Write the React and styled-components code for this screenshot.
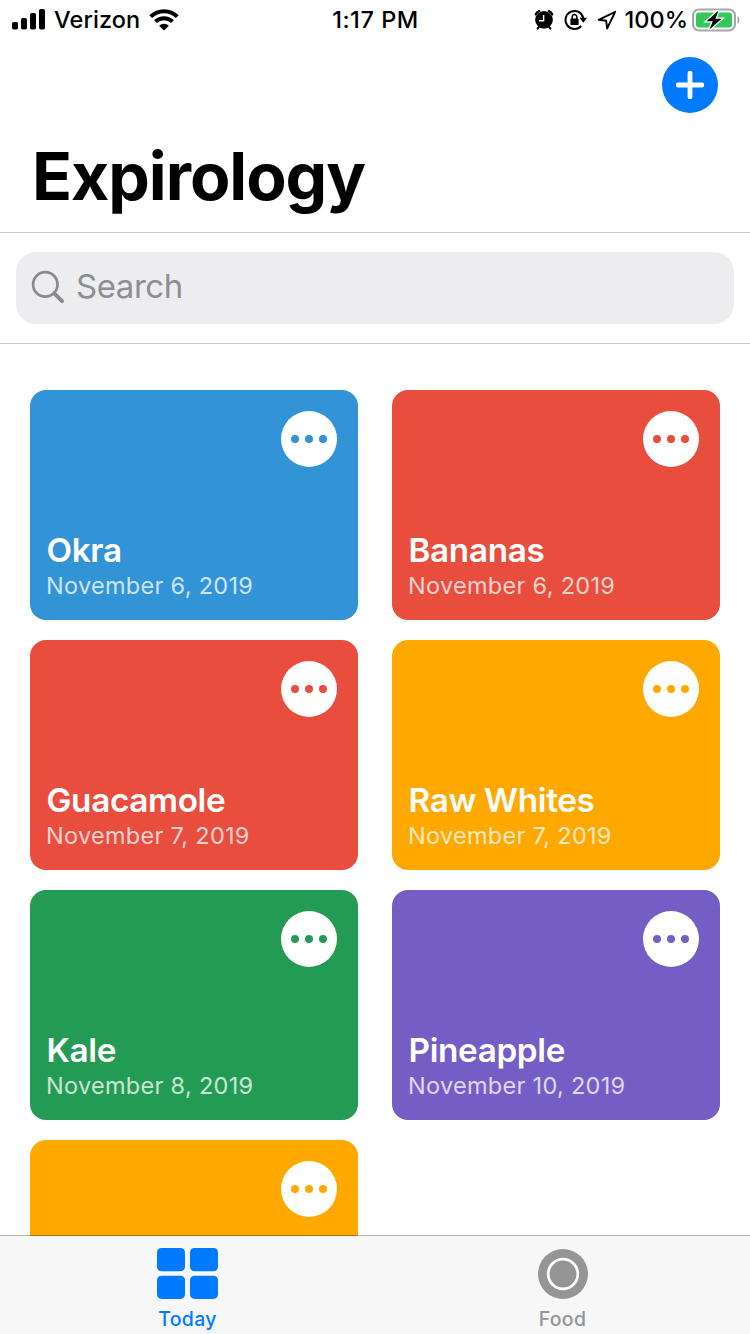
import React, { useState } from "react";
import styled, { createGlobalStyle, ThemeProvider } from "styled-components";

const theme = {
  primary: "#007aff",
  gray: "#8e8e93",
  inactive: "#959595",
  field: "#ededef",
  line: "#c8c8ca",
  bar: "#f7f7f7"
};

const GlobalStyle = createGlobalStyle`
  * {
    box-sizing: border-box;
  }
  body {
    margin: 0;
    background-color: #fff;
    font-family: Inter, "Liberation Sans", sans-serif;
    overflow: hidden;
  }
  button {
    border: none;
    padding: 0;
    font-family: inherit;
    background: none;
  }
`;

const Screen = styled.div`
  display: flex;
  flex-direction: column;
  width: 750px;
  height: 1334px;
  overflow: hidden;
`;

const StatusBar = styled.div`
  display: grid;
  grid-template-columns: 1fr auto 1fr;
  align-items: center;
  flex: none;
  height: 40px;
  padding: 0 9px 0 12px;
`;

const StatusGroup = styled.div`
  display: flex;
  align-items: center;
  justify-content: ${props => (props.$end ? "flex-end" : "flex-start")};
  svg {
    flex: none;
  }
`;

const StatusIcons = styled.div`
  display: flex;
  align-items: center;
  gap: 10px;
`;

const StatusText = styled.span`
  font-size: 23.5px;
  font-weight: 450;
  line-height: 40px;
  letter-spacing: ${props => props.$spacing || "0"};
  margin: ${props => props.$margin || "0"};
  white-space: nowrap;
`;

const Header = styled.header`
  flex: none;
  height: 193px;
  padding: 17px 32px 0 33px;
  border-bottom: 1px solid ${props => props.theme.line};
`;

const AddButton = styled.button`
  display: flex;
  align-items: center;
  justify-content: center;
  width: 56px;
  height: 56px;
  margin-left: auto;
  border-radius: 50%;
  background-color: ${props => props.theme.primary};
`;

const Title = styled.h1`
  margin: 23px 0 0 -1px;
  font-size: 66px;
  font-weight: 700;
  line-height: 80px;
  letter-spacing: -1.05px;
`;

const SearchWrapper = styled.div`
  flex: none;
  height: 111px;
  padding: 19px 16px;
  border-bottom: 1px solid ${props => props.theme.line};
`;

const SearchField = styled.label`
  display: flex;
  align-items: center;
  height: 72px;
  padding-left: 14px;
  border-radius: 20px;
  background-color: ${props => props.theme.field};
  svg {
    margin-bottom: 2px;
  }
`;

const SearchInput = styled.input`
  flex: auto;
  height: 72px;
  margin-left: 10px;
  padding: 0 0 5px;
  border: none;
  outline: none;
  background: none;
  font-family: inherit;
  font-size: 33px;
  letter-spacing: -0.45px;
  &::placeholder {
    color: ${props => props.theme.gray};
    opacity: 1;
  }
`;

const Cards = styled.main`
  display: grid;
  grid-template-columns: 328px 328px;
  grid-auto-rows: 230px;
  gap: 20px 34px;
  flex: 1 1 0;
  min-height: 0;
  padding: 46px 30px 0;
  overflow: hidden;
`;

const Card = styled.article`
  display: flex;
  flex-direction: column;
  justify-content: space-between;
  padding: 21px 21px 19px 16px;
  border-radius: 16px;
  background-color: ${props => props.$color};
  color: #fff;
`;

const MoreButton = styled.button`
  display: flex;
  align-items: center;
  justify-content: center;
  gap: 5.6px;
  width: 56px;
  height: 56px;
  margin-left: auto;
  border-radius: 50%;
  background-color: #fff;
`;

const Dot = styled.span`
  width: 8.2px;
  height: 8.2px;
  border-radius: 50%;
  background-color: ${props => props.$color};
`;

const FoodName = styled.h2`
  margin: 0 0 1px 0.5px;
  font-size: 33.3px;
  font-weight: 600;
  line-height: 40px;
  letter-spacing: -0.35px;
`;

const FoodDate = styled.p`
  margin: 0;
  font-size: 23.5px;
  line-height: 30px;
  letter-spacing: 0.3px;
  opacity: 0.75;
`;

const TabBar = styled.nav`
  display: flex;
  flex: none;
  height: 99px;
  margin-top: -1px;
  border-top: 1px solid rgba(0, 0, 0, 0.3);
  background-color: ${props => props.theme.bar};
  background-clip: padding-box;
`;

const Tab = styled.button`
  display: flex;
  flex: 1;
  flex-direction: column;
  align-items: center;
  padding-top: 12px;
  color: ${props => (props.$active ? props.theme.primary : props.theme.inactive)};
`;

const TabLabel = styled.span`
  margin-top: 6px;
  font-size: 19.5px;
  font-weight: 450;
  line-height: 26px;
  letter-spacing: 0.3px;
`;

const SignalIcon = () => (
  <svg width="34" height="22" viewBox="0 0 34 22">
    <rect x="0" y="13" width="6" height="7.5" rx="1.8" />
    <rect x="9" y="9" width="6" height="11.5" rx="1.8" />
    <rect x="18" y="4" width="6" height="16.5" rx="1.8" />
    <rect x="27" y="0" width="6" height="20.5" rx="1.8" />
  </svg>
);

const WifiIcon = () => (
  <svg width="30" height="22" viewBox="0 0 30 22">
    <g fill="none" stroke="#000" strokeWidth="4">
      <path d="M1.7 7.7a18.8 18.8 0 0 1 26.6 0" />
      <path d="M6.6 12.6a11.9 11.9 0 0 1 16.8 0" />
    </g>
    <path d="M15 21.6l-4.9-4.9a7 7 0 0 1 9.8 0z" />
  </svg>
);

const AlarmIcon = () => (
  <svg width="20" height="22" viewBox="0 0 20 22">
    <path
      d="M1.8 5.4Q2.6 3 5.2 2.2M18.2 5.4Q17.4 3 14.8 2.2"
      fill="none"
      stroke="#000"
      strokeWidth="2.4"
      strokeLinecap="round"
    />
    <path d="M3.6 19.6l2-2.4M16.4 19.6l-2-2.4" stroke="#000" strokeWidth="2" strokeLinecap="round" />
    <circle cx="10" cy="10.9" r="8.8" />
    <path d="M9.6 6v5.7H5" fill="none" stroke="#fff" strokeWidth="1.5" />
  </svg>
);

const RotationLockIcon = () => (
  <svg width="23" height="22" viewBox="0 0 23 22">
    <path
      d="M17.2 17A9 9 0 1 1 19.4 9.6"
      fill="none"
      stroke="#000"
      strokeWidth="2"
    />
    <path d="M15.6 8.8H23l-3.7 5z" />
    <rect x="6.4" y="9.6" width="8.2" height="6.4" rx="0.8" />
    <path d="M8.2 10V7.9a2.3 2.3 0 0 1 4.6 0V10" fill="none" stroke="#000" strokeWidth="1.5" />
  </svg>
);

const LocationIcon = () => (
  <svg width="20" height="20" viewBox="0 0 20 20">
    <path
      d="M18.2 1.8L1.7 9.8l7.5.9.9 7.8z"
      fill="none"
      stroke="#000"
      strokeWidth="1.9"
      strokeLinejoin="round"
    />
  </svg>
);

const BatteryIcon = () => (
  <svg width="49" height="24" viewBox="0 0 49 24">
    <rect x="1" y="1.5" width="42" height="21" rx="6" fill="none" stroke="#a6a6a6" strokeWidth="2" />
    <path d="M45.5 8.2c2.6 1 2.6 6.6 0 7.6z" fill="#a6a6a6" />
    <rect x="4" y="4.5" width="36" height="15" rx="3.2" fill="#35c759" />
    <path
      d="M26.6 2.4L14.6 13.2h6.2l-3.4 8.4 12.2-10.8h-6.2z"
      fill="#000"
      stroke="#fff"
      strokeWidth="2.6"
      paintOrder="stroke"
    />
  </svg>
);

const PlusIcon = () => (
  <svg width="28" height="28" viewBox="0 0 28 28">
    <path d="M14 2.2v23.6M2.2 14h23.6" stroke="#fff" strokeWidth="4.8" strokeLinecap="round" />
  </svg>
);

const SearchIcon = () => (
  <svg width="36" height="36" viewBox="0 0 36 36" fill="none" stroke="#8a8a8d">
    <circle cx="15.3" cy="15.4" r="12.2" strokeWidth="2.7" />
    <path d="M24.4 24.6l7.7 7.6" strokeWidth="3.8" strokeLinecap="round" />
  </svg>
);

const TodayIcon = () => (
  <svg width="61" height="52" viewBox="0 0 61 52" fill="currentColor">
    <rect x="0" y="0" width="28" height="23.2" rx="4.5" />
    <rect x="33" y="0" width="28" height="23.2" rx="4.5" />
    <rect x="0" y="27.7" width="28" height="23.2" rx="4.5" />
    <rect x="33" y="27.7" width="28" height="23.2" rx="4.5" />
  </svg>
);

const FoodIcon = () => (
  <svg width="51" height="52" viewBox="0 0 51 52">
    <circle cx="26" cy="26" r="25" fill="currentColor" />
    <circle cx="26" cy="26" r="14.8" fill="none" stroke="#fff" strokeWidth="2.7" />
  </svg>
);

const foods = [
  { name: "Okra", date: "November 6, 2019", color: "#3293d6" },
  { name: "Bananas", date: "November 6, 2019", color: "#e84d3d" },
  { name: "Guacamole", date: "November 7, 2019", color: "#e84d3d" },
  { name: "Raw Whites", date: "November 7, 2019", color: "#ffa800" },
  { name: "Kale", date: "November 8, 2019", color: "#249b54" },
  { name: "Pineapple", date: "November 10, 2019", color: "#745dc4" },
  { color: "#ffa800" }
];

const FoodCard = ({ name, date, color }) => (
  <Card $color={color}>
    <MoreButton type="button" aria-label="more">
      <Dot $color={color} />
      <Dot $color={color} />
      <Dot $color={color} />
    </MoreButton>
    {name && (
      <div>
        <FoodName>{name}</FoodName>
        <FoodDate>{date}</FoodDate>
      </div>
    )}
  </Card>
);

const App = () => {
  const [query, setQuery] = useState("");
  const [tab, setTab] = useState("today");

  // only keep the foods whose name contains the query
  const visible = foods.filter(
    food => !query || (food.name || "").toLowerCase().includes(query.toLowerCase())
  );

  return (
    <ThemeProvider theme={theme}>
      <GlobalStyle />
      <Screen>
        <StatusBar>
          <StatusGroup>
            <SignalIcon />
            <StatusText $margin="0 9px 0 8px" $spacing="0.1px">
              Verizon
            </StatusText>
            <WifiIcon />
          </StatusGroup>
          <StatusText $spacing="0.55px" $margin="0 2px 0 0">
            1:17 PM
          </StatusText>
          <StatusGroup $end>
            <StatusIcons>
              <AlarmIcon />
              <RotationLockIcon />
              <LocationIcon />
            </StatusIcons>
            <StatusText $margin="0 4px 0 8px">100%</StatusText>
            <BatteryIcon />
          </StatusGroup>
        </StatusBar>
        <Header>
          <AddButton type="button" aria-label="add food">
            <PlusIcon />
          </AddButton>
          <Title>Expirology</Title>
        </Header>
        <SearchWrapper>
          <SearchField>
            <SearchIcon />
            <SearchInput
              type="text"
              placeholder="Search"
              value={query}
              onChange={e => setQuery(e.target.value)}
            />
          </SearchField>
        </SearchWrapper>
        <Cards>
          {visible.map((food, i) => (
            <FoodCard key={i} {...food} />
          ))}
        </Cards>
        <TabBar>
          <Tab type="button" $active={tab === "today"} onClick={() => setTab("today")}>
            <TodayIcon />
            <TabLabel>Today</TabLabel>
          </Tab>
          <Tab type="button" $active={tab === "food"} onClick={() => setTab("food")}>
            <FoodIcon />
            <TabLabel>Food</TabLabel>
          </Tab>
        </TabBar>
      </Screen>
    </ThemeProvider>
  );
};

export default App;
